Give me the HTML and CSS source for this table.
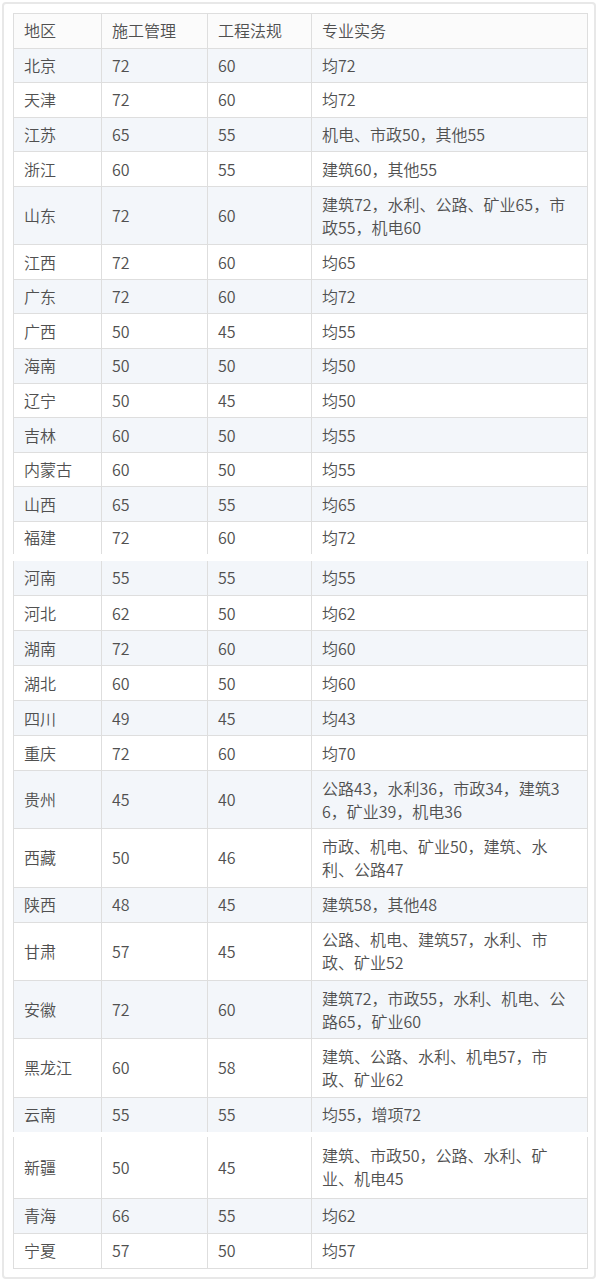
FILE: index.html
```html
<!DOCTYPE html>
<html lang="zh-CN">
<head>
<meta charset="utf-8">
<title>各地区合格分数线</title>
<link rel="stylesheet" href="styles.css">
</head>
<body>
<div class="frame">
  <table class="grid seg seg1">
    <colgroup><col class="c1"><col class="c2"><col class="c3"><col class="c4"></colgroup>
    <tr class="head"><td>地区</td><td>施工管理</td><td>工程法规</td><td>专业实务</td></tr>
    <tr class="odd"><td>北京</td><td>72</td><td>60</td><td>均72</td></tr>
    <tr><td>天津</td><td>72</td><td>60</td><td>均72</td></tr>
    <tr class="odd"><td>江苏</td><td>65</td><td>55</td><td>机电、市政50，其他55</td></tr>
    <tr><td>浙江</td><td>60</td><td>55</td><td>建筑60，其他55</td></tr>
    <tr class="odd dbl"><td>山东</td><td>72</td><td>60</td><td>建筑72，水利、公路、矿业65，市政55，机电60</td></tr>
    <tr><td>江西</td><td>72</td><td>60</td><td>均65</td></tr>
    <tr class="odd"><td>广东</td><td>72</td><td>60</td><td>均72</td></tr>
    <tr><td>广西</td><td>50</td><td>45</td><td>均55</td></tr>
    <tr class="odd"><td>海南</td><td>50</td><td>50</td><td>均50</td></tr>
    <tr><td>辽宁</td><td>50</td><td>45</td><td>均50</td></tr>
    <tr class="odd"><td>吉林</td><td>60</td><td>50</td><td>均55</td></tr>
    <tr><td>内蒙古</td><td>60</td><td>50</td><td>均55</td></tr>
    <tr class="odd"><td>山西</td><td>65</td><td>55</td><td>均65</td></tr>
    <tr class="cut-bottom"><td>福建</td><td>72</td><td>60</td><td>均72</td></tr>
  </table>
  <table class="grid seg seg2">
    <colgroup><col class="c1"><col class="c2"><col class="c3"><col class="c4"></colgroup>
    <tr class="odd cut-top"><td>河南</td><td>55</td><td>55</td><td>均55</td></tr>
    <tr><td>河北</td><td>62</td><td>50</td><td>均62</td></tr>
    <tr class="odd"><td>湖南</td><td>72</td><td>60</td><td>均60</td></tr>
    <tr><td>湖北</td><td>60</td><td>50</td><td>均60</td></tr>
    <tr class="odd"><td>四川</td><td>49</td><td>45</td><td>均43</td></tr>
    <tr><td>重庆</td><td>72</td><td>60</td><td>均70</td></tr>
    <tr class="odd dbl"><td>贵州</td><td>45</td><td>40</td><td>公路43，水利36，市政34，建筑36，矿业39，机电36</td></tr>
    <tr class="dbl"><td>西藏</td><td>50</td><td>46</td><td>市政、机电、矿业50，建筑、水利、公路47</td></tr>
    <tr class="odd"><td>陕西</td><td>48</td><td>45</td><td>建筑58，其他48</td></tr>
    <tr class="dbl"><td>甘肃</td><td>57</td><td>45</td><td>公路、机电、建筑57，水利、市政、矿业52</td></tr>
    <tr class="odd dbl"><td>安徽</td><td>72</td><td>60</td><td>建筑72，市政55，水利、机电、公路65，矿业60</td></tr>
    <tr class="dbl"><td>黑龙江</td><td>60</td><td>58</td><td>建筑、公路、水利、机电57，市政、矿业62</td></tr>
    <tr class="odd cut-bottom"><td>云南</td><td>55</td><td>55</td><td>均55，增项72</td></tr>
  </table>
  <table class="grid seg seg3">
    <colgroup><col class="c1"><col class="c2"><col class="c3"><col class="c4"></colgroup>
    <tr class="tall cut-top"><td>新疆</td><td>50</td><td>45</td><td>建筑、市政50，公路、水利、矿业、机电45</td></tr>
    <tr class="odd"><td>青海</td><td>66</td><td>55</td><td>均62</td></tr>
    <tr><td>宁夏</td><td>57</td><td>50</td><td>均57</td></tr>
  </table>
</div>
</body>
</html>
```

FILE: styles.css
```css
html, body {
  margin: 0;
  padding: 0;
  background: #ffffff;
}

body {
  font-family: "Noto Sans CJK SC", "Noto Sans", sans-serif;
  font-size: 16px;
  font-weight: 350;
  color: #505050;
}

.frame {
  margin: 2px 4px 2px 2px;
  border: 2px solid #e8e8e8;
  border-radius: 4px;
  padding: 9px 7px 8px 9px;
  display: flex;
  flex-direction: column;
}

.grid {
  width: 574px;
  table-layout: fixed;
  border-collapse: collapse;
}

.grid .c1 { width: 88px; }
.grid .c2 { width: 106px; }
.grid .c3 { width: 104px; }
.grid .c4 { width: 276px; }

.grid td {
  border: 1px solid #dedede;
  padding: 0 6px 0 10px;
  line-height: 23px;
  vertical-align: middle;
  word-break: break-all;
  background: #ffffff;
}

.grid td:last-child {
  padding-right: 18px;
}

.grid tr.odd td {
  background: #f3f6fa;
}

.grid tr.head td {
  background: #fbfbfb;
}

.seg1 tr { height: 34.6px; }
.seg2 tr { height: 35px; }
.seg3 tr { height: 35px; }

.grid tr.dbl { height: 58.3px; }
.grid tr.tall { height: 61px; }

.grid tr.cut-bottom td { border-bottom: none; }
.grid tr.cut-top td { border-top: none; }

.seg1 tr.cut-bottom { height: 32px; }

.seg2 { margin-top: 7px; }
.seg3 { margin-top: 5px; }
```
